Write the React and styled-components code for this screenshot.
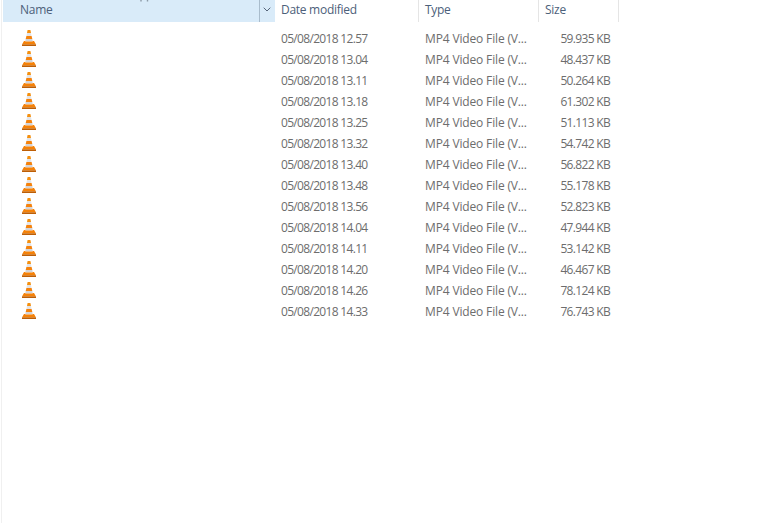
import React from "react";
import styled, { createGlobalStyle } from "styled-components";

const Global = createGlobalStyle`
  html, body { margin: 0; padding: 0; background: #fff; }
  body { font-family: "Open Sans", "Noto Sans", sans-serif; font-size: 12px; color: #6d6d6d; }
`;

const Page = styled.div`
  width: 758px;
  height: 523px;
  overflow: hidden;
  padding-left: 1px;
  box-sizing: border-box;
`;
const Pane = styled.div`
  height: 100%;
  border-left: 1px solid #f0f0f0;
  padding-left: 1px;
`;
const Columns = `
  display: grid;
  grid-template-columns: 272px 144px 120px 80px;
`;
const Header = styled.div`
  ${Columns}
  height: 22px;
  margin-bottom: 6px;
`;
const HeaderCell = styled.div`
  position: relative;
  display: flex;
  align-items: center;
  padding-left: ${(p) => p.$pad}px;
  padding-bottom: 3px;
  box-sizing: border-box;
  letter-spacing: -0.28px;
  color: #4c607a;
  background: ${(p) => (p.$active ? "#d9ebf9" : "transparent")};
  border-right: ${(p) => (p.$active ? "none" : "1px solid #e5e5e5")};
`;
const SortCaret = styled.svg`
  position: absolute;
  top: 0;
  left: 137px;
`;
const Chevron = styled.div`
  position: absolute;
  top: 0;
  right: 0;
  bottom: 0;
  width: 16px;
  border-left: 1px solid #a9bccc;
  display: flex;
  align-items: center;
  justify-content: center;
  padding-bottom: 3px;
  padding-right: 2px;
  box-sizing: border-box;
`;
const Row = styled.div`
  ${Columns}
  height: 21px;
  align-items: center;
`;
const IconCell = styled.div`
  padding-left: 19px;
  padding-bottom: 1px;
  display: flex;
  align-items: center;
`;
const Cell = styled.div`
  padding-left: 6px;
  white-space: nowrap;
  line-height: 21px;
  letter-spacing: ${(p) => p.$tracking}px;
`;
const SizeCell = styled.div`
  text-align: right;
  padding-right: 9px;
  white-space: nowrap;
  line-height: 21px;
  letter-spacing: -0.68px;
`;

const Cone = () => (
  <svg width="14" height="16" viewBox="0 0 14 16">
    <path d="M5.6 0h2.8l.6 3H5z" fill="#f5900f" />
    <path d="M5 3h4l.6 3H4.4z" fill="#e4e4e6" />
    <path d="M4.4 6h5.2l.7 3H3.7z" fill="#f5820c" />
    <path d="M3.7 9h6.6l.5 2.4H3.2z" fill="#d4d4d7" />
    <path d="M2 11h1.4l-.2 .6h7.6l-.2-.6H12l2 3.6H0z" fill="#f58209" />
    <path d="M0 14.4h14V16H0z" fill="#bd5e06" />
  </svg>
);

const files = [
  ["05/08/2018 12.57", "59.935 KB"],
  ["05/08/2018 13.04", "48.437 KB"],
  ["05/08/2018 13.11", "50.264 KB"],
  ["05/08/2018 13.18", "61.302 KB"],
  ["05/08/2018 13.25", "51.113 KB"],
  ["05/08/2018 13.32", "54.742 KB"],
  ["05/08/2018 13.40", "56.822 KB"],
  ["05/08/2018 13.48", "55.178 KB"],
  ["05/08/2018 13.56", "52.823 KB"],
  ["05/08/2018 14.04", "47.944 KB"],
  ["05/08/2018 14.11", "53.142 KB"],
  ["05/08/2018 14.20", "46.467 KB"],
  ["05/08/2018 14.26", "78.124 KB"],
  ["05/08/2018 14.33", "76.743 KB"],
];

export default function App() {
  return (
    <Page>
      <Global />
      <Pane>
        <Header>
          <HeaderCell $active $pad={17}>
            Name
            <SortCaret width="9" height="2" viewBox="0 0 9 2">
              <path d="M1 0v1.5M7.5 0v1.5" stroke="#8c99a6" strokeWidth="1.4" />
            </SortCaret>
            <Chevron>
              <svg width="8" height="5" viewBox="0 0 8 5">
                <path d="M.7.7 4 4 7.3.7" fill="none" stroke="#56657a" strokeWidth="1" />
              </svg>
            </Chevron>
          </HeaderCell>
          <HeaderCell $pad={6}>Date modified</HeaderCell>
          <HeaderCell $pad={6}>Type</HeaderCell>
          <HeaderCell $pad={6}>Size</HeaderCell>
        </Header>
        {files.map(([date, size]) => (
          <Row key={date}>
            <IconCell>
              <Cone />
            </IconCell>
            <Cell $tracking={-0.68}>{date}</Cell>
            <Cell $tracking={-0.15}>MP4 Video File (V...</Cell>
            <SizeCell>{size}</SizeCell>
          </Row>
        ))}
      </Pane>
    </Page>
  );
}
